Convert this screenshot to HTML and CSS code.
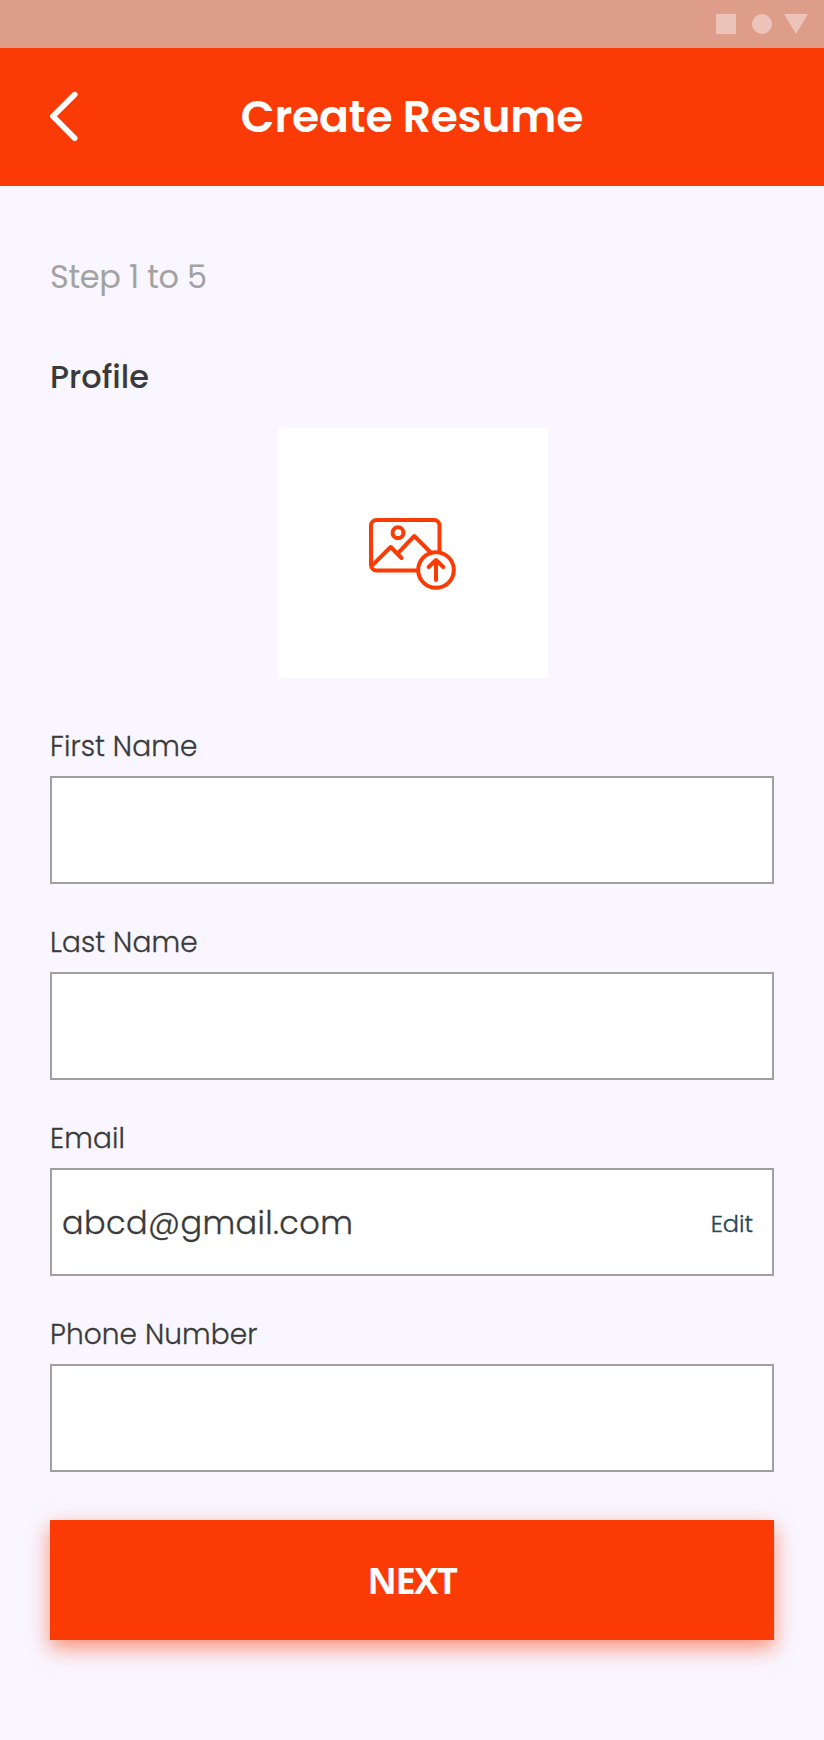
FILE: index.html
```html
<!DOCTYPE html>
<html lang="en">
<head>
<meta charset="utf-8">
<title>Create Resume</title>
<link rel="stylesheet" href="styles.css">
</head>
<body>
<div class="status-bar">
  <svg width="92" height="20" viewBox="0 0 92 20" fill="#ecc3b8"><path d="M0 0h20v20H0z"/><circle cx="46" cy="10" r="10"/><path d="M68 0h24L80 20z"/></svg>
</div>
<header class="header">
  <svg class="back" width="30" height="52" viewBox="0 0 30 52"><path d="M24.7 4.6 2.9 26.3l21.8 22" fill="none" stroke="#fff" stroke-width="5.6" stroke-linecap="round" stroke-linejoin="round"/></svg>
  <h1 class="title">Create Resume</h1>
</header>
<main class="content">
  <p class="step">Step 1 to 5</p>
  <h2 class="section">Profile</h2>
  <div class="upload">
    <svg width="90" height="78" viewBox="0 0 90 78" fill="none" stroke="#fb3b05" stroke-width="4" stroke-linecap="round" stroke-linejoin="round">
      <rect x="3" y="6" width="68.5" height="50.5" rx="5.5"/>
      <circle cx="30" cy="18.7" r="5.4"/>
      <path d="M4 51.7 22.7 33l10.8 11M29.7 39.3 46.3 22l16 16"/>
      <circle cx="68" cy="56" r="17.8" fill="#fff"/>
      <path d="M68 66V46.5M60.7 53l7.3-7 7.3 7"/>
    </svg>
  </div>
  <form class="form">
    <div class="field"><label class="label" for="first">First Name</label><input class="input" id="first"></div>
    <div class="field"><label class="label" for="last">Last Name</label><input class="input" id="last"></div>
    <div class="field"><span class="label">Email</span><div class="input filled"><span class="value">abcd@gmail.com</span><a class="edit">Edit</a></div></div>
    <div class="field"><label class="label" for="phone">Phone Number</label><input class="input" id="phone"></div>
    <button class="next" type="button">NEXT</button>
  </form>
</main>
</body>
</html>
```
FILE: styles.css
```css
* { box-sizing: border-box; }
body {
  margin: 0;
  min-height: 1740px;
  background: #f9f6ff;
  color: #3a3a3a;
  font-family: Poppins, Inter, "Liberation Sans", sans-serif;
}
.status-bar {
  display: flex;
  align-items: center;
  justify-content: flex-end;
  height: 48px;
  padding-right: 16px;
  background: #de9d89;
}
.header {
  display: grid;
  grid-template-columns: 30px 1fr 30px;
  align-items: center;
  height: 138px;
  padding: 0 50px;
  background: #fb3b05;
}
.back { display: block; margin-top: -2px; }
.title {
  margin: 0;
  color: #fff;
  font-size: 44px;
  font-weight: 600;
  line-height: 60px;
  letter-spacing: -0.2px;
  text-align: center;
}
.content { padding: 67px 50px 0; }
.step {
  margin: 0 0 52px;
  color: #a2a2a2;
  font-size: 32px;
  line-height: 48px;
  letter-spacing: -0.3px;
}
.section {
  margin: 0 0 27px;
  font-size: 32px;
  font-weight: 500;
  line-height: 48px;
}
.upload {
  display: flex;
  align-items: center;
  justify-content: center;
  width: 270px;
  height: 250px;
  margin: 0 0 48px 228px;
  background: #fff;
}
.form { display: flex; flex-direction: column; }
.field {
  display: flex;
  flex-direction: column;
  align-items: flex-start;
  gap: 8px;
  margin-bottom: 38px;
}
.label {
  font-size: 28px;
  font-weight: 300;
  line-height: 42px;
  letter-spacing: 0.1px;
  -webkit-text-stroke: 0.3px currentColor;
}
.input {
  width: 100%;
  height: 108px;
  padding: 0 19px 0 10px;
  border: 2px solid #a0a0a0;
  border-radius: 0;
  background: #fff;
  font: inherit;
  font-size: 32px;
}
.filled {
  display: flex;
  align-items: center;
  justify-content: space-between;
}
.value {
  margin-top: 2px;
  font-size: 32px;
  font-weight: 300;
  letter-spacing: 0.4px;
  -webkit-text-stroke: 0.3px currentColor;
}
.edit {
  margin-top: 2px;
  color: #264653;
  font-size: 24px;
  font-weight: 300;
  -webkit-text-stroke: 0.3px currentColor;
}
.next {
  height: 120px;
  margin-top: 10px;
  border: 0;
  background: #fb3b05;
  box-shadow: 0 8px 20px rgba(251, 59, 5, 0.55);
  color: #fff;
  font-family: "Open Sans", "Noto Sans", sans-serif;
  font-size: 36px;
  font-weight: 700;
  letter-spacing: -1.3px;
}
```
